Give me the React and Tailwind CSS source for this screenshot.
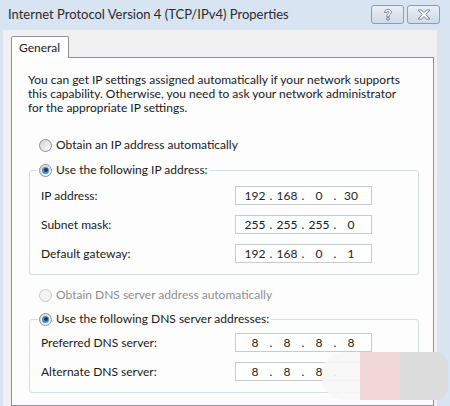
import React from "react";

const font = { fontFamily: "Lato, 'Noto Sans', sans-serif" };

function Radio({ checked, disabled }) {
  return (
    <span
      className={`relative inline-flex w-[13px] h-[13px] shrink-0 items-center justify-center rounded-full border ${
        disabled
          ? "border-[#c9c9c9] bg-[#f3f3f3]"
          : "border-[#8b8e92] bg-gradient-to-br from-[#d6d6d6] to-[#fbfbfb]"
      }`}
    >
      {checked && (
        <span className="w-[7px] h-[7px] rounded-full bg-[#4b8fc4] flex items-center justify-center">
          <span className="w-[4px] h-[4px] rounded-full bg-[#183d63]" />
        </span>
      )}
    </span>
  );
}

function IpField({ octets }) {
  return (
    <div className="w-[137px] h-[19px] border border-[#c5cbd3] bg-white flex items-center pl-[6px] text-[12px] text-[#222]">
      {octets.map((o, i) => (
        <React.Fragment key={i}>
          {i > 0 && <span className="w-[6px] text-center">.</span>}
          <span className="w-[26px] text-center">{o}</span>
        </React.Fragment>
      ))}
    </div>
  );
}

function Row({ label, octets }) {
  return (
    <div className="flex items-center h-[29px] pl-[11px]">
      <span className="w-[194px] text-[12px] text-[#1a1a1a]">{label}</span>
      <IpField octets={octets} />
    </div>
  );
}

function Group({ legend, children }) {
  return (
    <fieldset className="ml-[17px] mr-[14px] border border-[#d5dde5] rounded-[3px] pb-[6px]">
      <legend className="ml-[8px] px-[1px] flex items-center gap-[4px] text-[12px] text-[#1a1a1a] h-[16px]">
        <Radio checked />
        <span className="pr-[1px]">{legend}</span>
      </legend>
      <div className="pt-[3px]">{children}</div>
    </fieldset>
  );
}

export default function App() {
  return (
    <div
      className="w-[450px] h-[406px] overflow-hidden bg-[#d8e4f2] flex flex-col relative"
      style={font}
    >
      {/* title bar */}
      <div className="h-[30px] shrink-0 flex items-center pl-[8px] pr-[10px]">
        <span className="text-[13px] text-[#2b2b2b] flex-1 pb-[1px]">
          Internet Protocol Version 4 (TCP/IPv4) Properties
        </span>
        <div className="flex gap-[3px] -mt-[1px]">
          <div className="w-[33px] h-[19px] rounded-[3px] border border-[#8d9db4] bg-gradient-to-b from-[#e9eef5] to-[#cfdaea] flex items-center justify-center">
            <svg width="10" height="12" viewBox="0 0 10 12">
              <path
                d="M1.5 3.5 C1.5 1 3.5 0.5 5 0.5 C7 0.5 8.5 1.5 8.5 3.3 C8.5 5 6.5 5.5 6.2 6.8 L6.2 7.8 L3.8 7.8 L3.8 6.5 C3.8 5 6 4.6 6 3.4 C6 2.6 5.5 2.3 5 2.3 C4.2 2.3 3.9 2.9 3.9 3.5 Z M3.8 8.8 L6.2 8.8 L6.2 11 L3.8 11 Z"
                fill="#fff"
                stroke="#6d7b8e"
                strokeWidth="0.9"
              />
            </svg>
          </div>
          <div className="w-[33px] h-[19px] rounded-[3px] border border-[#8d9db4] bg-gradient-to-b from-[#e9eef5] to-[#cfdaea] flex items-center justify-center">
            <svg width="14" height="11" viewBox="0 0 14 11">
              <path
                d="M1 1 L4.5 1 L7 3.6 L9.5 1 L13 1 L8.8 5.5 L13 10 L9.5 10 L7 7.4 L4.5 10 L1 10 L5.2 5.5 Z"
                fill="#fff"
                stroke="#6d7b8e"
                strokeWidth="0.9"
                strokeLinejoin="round"
              />
            </svg>
          </div>
        </div>
      </div>

      {/* dialog body */}
      <div className="flex-1 ml-[3px] mr-[13px] bg-[#f0f0f0] pt-[6px] pl-[8px] pr-[3px] flex flex-col">
        <div className="flex">
          <div className="w-[58px] h-[22px] -mb-px border border-b-0 border-[#8e9298] bg-white rounded-t-[2px] flex items-center pl-[7px] text-[12px] text-[#1a1a1a] relative z-10">
            General
          </div>
        </div>
        <div className="flex-1 border border-[#8e9298] bg-[#fdfdfd] pt-[15px]">
          <p className="ml-[16px] w-[382px] text-[12px] leading-[14px] text-[#1a1a1a]">
            You can get IP settings assigned automatically if your network supports
            this capability. Otherwise, you need to ask your network administrator
            for the appropriate IP settings.
          </p>

          <div className="mt-[22px] pl-[27px] flex items-center gap-[4px] h-[16px] text-[12px] text-[#1a1a1a]">
            <Radio />
            <span>Obtain an IP address automatically</span>
          </div>

          <div className="mt-[9px]">
            <Group legend="Use the following IP address:">
              <Row label="IP address:" octets={["192", "168", "0", "30"]} />
              <Row label="Subnet mask:" octets={["255", "255", "255", "0"]} />
              <Row label="Default gateway:" octets={["192", "168", "0", "1"]} />
            </Group>
          </div>

          <div className="mt-[12px] pl-[27px] flex items-center gap-[4px] h-[16px] text-[12px] text-[#8e8e8e]">
            <Radio disabled />
            <span>Obtain DNS server address automatically</span>
          </div>

          <div className="mt-[8px]">
            <Group legend="Use the following DNS server addresses:">
              <div className="-mt-[2px]">
                <Row label="Preferred DNS server:" octets={["8", "8", "8", "8"]} />
                <Row label="Alternate DNS server:" octets={["8", "8", "8", ""]} />
              </div>
            </Group>
          </div>
        </div>
      </div>

      {/* watermark overlay */}
      <div className="absolute left-[322px] top-[352px] w-[126px] h-[48px] flex">
        <div className="w-[38px] bg-[#f7f7f7]/90 rounded-l-[22px]" />
        <div className="w-[40px] bg-[#f1d6d8]" />
        <div className="flex-1 bg-[#dcdcdc] rounded-r-[12px]" />
      </div>
    </div>
  );
}
